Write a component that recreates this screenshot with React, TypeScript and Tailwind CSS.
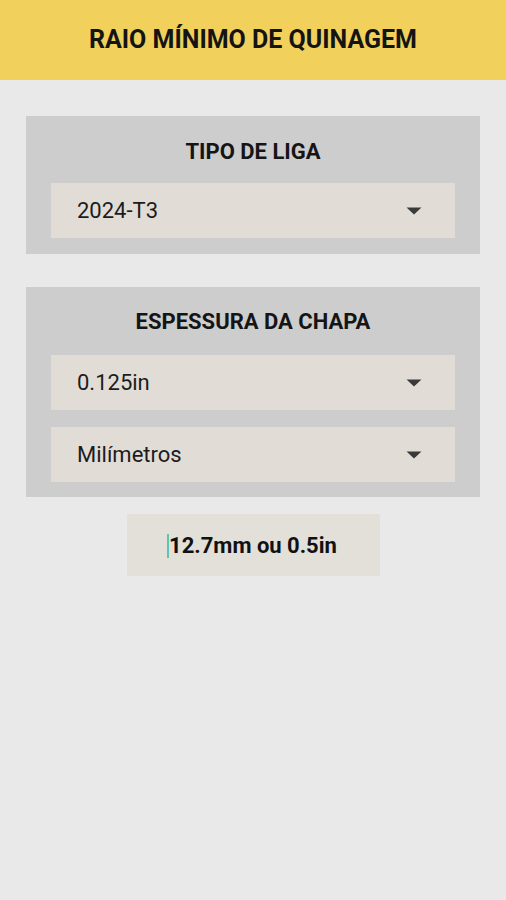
export default function App() {
  const Select = ({ value }: { value: string }) => (
    <div className="flex h-[55px] items-center justify-between bg-[#e2dcd7] pl-[26px] pr-[33px]">
      <span className="text-[22px] leading-[26px] text-[#1c1c1c]">{value}</span>
      <svg width="16" height="8" viewBox="0 0 16 8">
        <path d="M0.5 0.5 L15.5 0.5 L8 7.5 Z" fill="#3a3a3a" />
      </svg>
    </div>
  )

  return (
    <div className="min-h-[900px] bg-[#e9e9e9] font-['Roboto',sans-serif]">
      <header className="flex h-[80px] items-center justify-center bg-[#f1d15b]">
        <h1 className="text-[25px] font-bold text-[#141414]">RAIO MÍNIMO DE QUINAGEM</h1>
      </header>

      <div className="flex flex-col px-[26px] pt-[36px]">
        <section className="bg-[#cdcdcd] px-[25px] pb-[16px] pt-[24px]">
          <h2 className="mb-[19px] text-center text-[22px] font-bold leading-[24px] text-[#151515]">TIPO DE LIGA</h2>
          <Select value="2024-T3" />
        </section>

        <section className="mt-[33px] flex flex-col gap-[17px] bg-[#cdcdcd] px-[25px] pb-[15px] pt-[23px]">
          <h2 className="mb-[4px] text-center text-[22px] font-bold leading-[24px] text-[#151515]">ESPESSURA DA CHAPA</h2>
          <Select value="0.125in" />
          <Select value="Milímetros" />
        </section>

        <div className="mt-[17px] flex justify-center">
          <div className="flex h-[62px] w-[253px] items-center justify-center bg-[#e3dfd9]">
            <span className="relative text-[22px] font-bold text-[#111]">
              <span className="absolute left-[-2px] top-[5px] h-[24px] w-[2px] bg-[#5cc6b0]" />
              12.7mm ou 0.5in
            </span>
          </div>
        </div>
      </div>
    </div>
  )
}
